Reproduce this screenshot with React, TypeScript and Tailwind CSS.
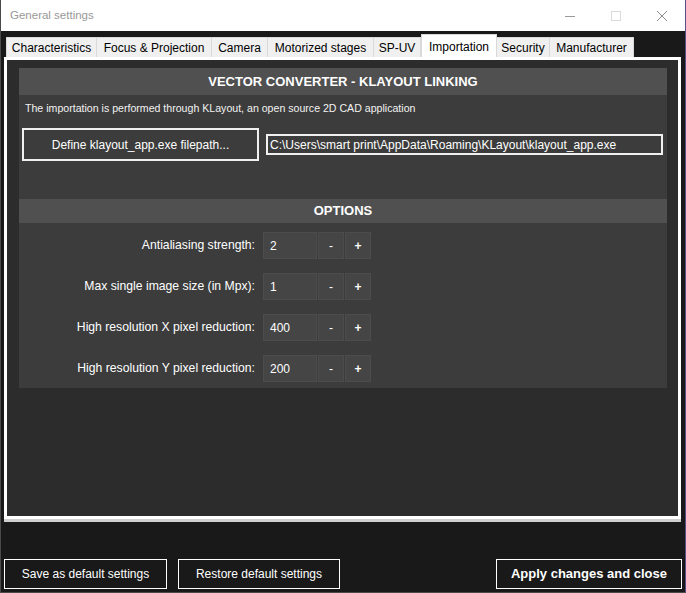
import React from 'react';

const tabs = [
  { label: 'Characteristics', w: 'w-[91px]' },
  { label: 'Focus & Projection', w: 'w-[115px]' },
  { label: 'Camera', w: 'w-[56px]' },
  { label: 'Motorized stages', w: 'w-[106px]' },
  { label: 'SP-UV', w: 'w-[47px]' },
  { label: 'Importation', w: 'w-[76px]', active: true },
  { label: 'Security', w: 'w-[53px]' },
  { label: 'Manufacturer', w: 'w-[84px]' },
];

const options = [
  { label: 'Antialiasing strength:', value: '2' },
  { label: 'Max single image size (in Mpx):', value: '1' },
  { label: 'High resolution X pixel reduction:', value: '400' },
  { label: 'High resolution Y pixel reduction:', value: '200' },
];

function TitleBar() {
  return (
    <div className="h-[31px] bg-white flex items-center shrink-0">
      <span className="pl-[9px] text-[11.5px] text-[#999999]">General settings</span>
      <div className="ml-auto flex h-full">
        <div className="w-[46px] h-full flex items-center justify-center">
          <svg width="10" height="10" viewBox="0 0 10 10">
            <line x1="0" y1="5.5" x2="10" y2="5.5" stroke="#9a9a9a" strokeWidth="1" />
          </svg>
        </div>
        <div className="w-[46px] h-full flex items-center justify-center">
          <svg width="10" height="10" viewBox="0 0 10 10">
            <rect x="0.5" y="0.5" width="9" height="9" fill="none" stroke="#dcdcdc" strokeWidth="1" />
          </svg>
        </div>
        <div className="w-[46px] h-full flex items-center justify-center">
          <svg width="10" height="10" viewBox="0 0 10 10">
            <path d="M0 0 L10 10 M10 0 L0 10" stroke="#8a8a8a" strokeWidth="1" />
          </svg>
        </div>
      </div>
    </div>
  );
}

function TabStrip() {
  return (
    <div className="h-[26px] flex items-end pl-[5px] shrink-0">
      {tabs.map((t) =>
        t.active ? (
          <div
            key={t.label}
            className={`${t.w} h-[23px] bg-white border border-b-0 border-[#d9d9d9] flex justify-center pt-[3px] text-[12px] text-black`}
          >
            {t.label}
          </div>
        ) : (
          <div
            key={t.label}
            className={`${t.w} h-[20px] bg-[#f0f0f0] border border-b-0 border-l-0 first:border-l border-[#d9d9d9] flex items-center justify-center text-[12px] text-black`}
          >
            {t.label}
          </div>
        )
      )}
    </div>
  );
}

function SectionHeader({ title, h }: { title: string; h: string }) {
  return (
    <div className={`${h} bg-[#505050] flex items-center justify-center text-[13px] font-bold text-white`}>
      {title}
    </div>
  );
}

function OptionRow({ label, value }: { label: string; value: string }) {
  return (
    <div className="flex items-center h-[27px]">
      <div className="w-[237px] text-right text-[12.2px] text-white pr-[1px]">{label}</div>
      <div className="ml-[7px] w-[54px] h-full bg-[#454545] border border-[#4c4c4c] flex items-center pl-[6px] text-[12px] text-white">
        {value}
      </div>
      <button className="ml-[1px] w-[26px] h-full bg-[#454545] border border-[#4c4c4c] flex items-center justify-center text-[12px] text-white">
        -
      </button>
      <button className="ml-[1px] w-[26px] h-full bg-[#454545] border border-[#4c4c4c] flex items-center justify-center text-[12px] font-bold text-white">
        +
      </button>
    </div>
  );
}

export default function App() {
  return (
    <div className="w-[686px] h-[593px] bg-[#191919] flex flex-col overflow-hidden border-l border-r border-b border-l-[#4a4a4a] border-r-[#5a4d84] border-b-[#4a4a4a] font-['Liberation_Sans',Arial,sans-serif]">
      <TitleBar />
      <TabStrip />

      {/* Tab page */}
      <div className="ml-[3px] w-[677px] h-[462px] border-[3px] border-white shadow-[0_3px_0_#cfcfcf] bg-[#2c2c2c] pl-[12px] pr-[11px] pt-[8px] shrink-0">
        <div className="bg-[#3c3c3c] flex flex-col">
          <SectionHeader h="h-[27px]" title="VECTOR CONVERTER - KLAYOUT LINKING" />

          <div className="h-[104px] flex flex-col">
            <p className="pl-[6px] pt-[6px] text-[10.6px] text-[#f2f2f2] leading-[14px]">
              The importation is performed through KLayout, an open source 2D CAD application
            </p>
            <div className="flex items-center pl-[3px] pt-[13px]">
              <button className="w-[237px] h-[33px] border-2 border-[#f0f0f0] text-[12px] text-white flex items-center justify-center">
                Define klayout_app.exe filepath...
              </button>
              <div className="ml-[7px] w-[397px] h-[21px] border-2 border-[#f0f0f0] bg-[#3c3c3c] flex items-center pl-[2px] text-[12px] text-white">
                {'C:\\Users\\smart print\\AppData\\Roaming\\KLayout\\klayout_app.exe'}
              </div>
            </div>
          </div>

          <SectionHeader h="h-[24px]" title="OPTIONS" />

          <div className="flex flex-col gap-[14px] pt-[9px] pb-[6px]">
            {options.map((o) => (
              <OptionRow key={o.label} label={o.label} value={o.value} />
            ))}
          </div>
        </div>
      </div>

      {/* Footer buttons */}
      <div className="mt-auto mb-[3px] flex px-[3px]">
        <button className="w-[163px] h-[30px] border border-white text-[12px] text-white">
          Save as default settings
        </button>
        <button className="ml-[11px] w-[162px] h-[30px] border border-white text-[12px] text-white">
          Restore default settings
        </button>
        <button className="ml-auto w-[186px] h-[30px] border border-white text-[13px] font-bold text-white">
          Apply changes and close
        </button>
      </div>
    </div>
  );
}
